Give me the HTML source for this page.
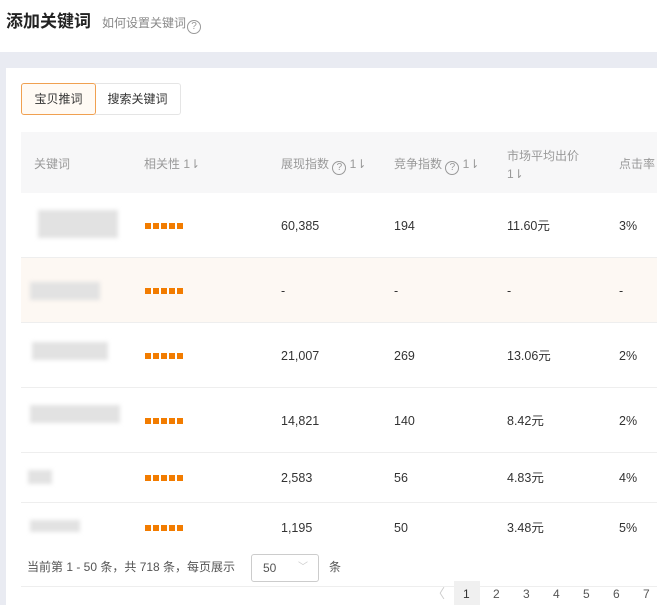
<!DOCTYPE html>
<html><head><meta charset="utf-8"><style>
*{margin:0;padding:0;box-sizing:border-box}
body{width:657px;height:605px;overflow:hidden;background:#fff;font-family:"Liberation Sans","Noto Sans CJK SC",sans-serif;position:relative;color:#333}
.a{position:absolute;white-space:nowrap;line-height:16px}
.h{font-size:12px;color:#999}
.c{font-size:12.5px;color:#333;height:16px}
.sq{position:absolute;width:38px;height:6px;background:repeating-linear-gradient(90deg,#f27c00 0 6px,#fff 6px 8px)}
.q{display:inline-block;width:14px;height:14px;border:1px solid #999;border-radius:50%;font-size:10px;line-height:12px;text-align:center;vertical-align:-2px;color:#999;font-family:"Liberation Sans",sans-serif}
.blur{position:absolute;background:#e2e2e2;filter:blur(2px)}
</style></head><body>
<div class="a" style="left:6px;top:12px;font-size:17px;font-weight:bold;color:#222;line-height:20px">添加关键词</div>
<div class="a" style="left:102px;top:15px;font-size:12px;color:#888">如何设置关键词<span class="q" style="margin-left:1px">?</span></div>
<div class="a" style="left:0;top:52px;width:657px;height:553px;background:#e9ebf2"></div>
<div class="a" style="left:6px;top:68px;width:651px;height:537px;background:#fff"></div>
<div class="a" style="left:21px;top:83px;width:75px;height:32px;border:1px solid #f0a050;border-radius:3px;background:#fffaf4;font-size:12px;line-height:30px;text-align:center;color:#333">宝贝推词</div>
<div class="a" style="left:95px;top:83px;width:86px;height:32px;border:1px solid #e5e5e5;border-left:none;border-radius:0 3px 3px 0;font-size:12px;line-height:30px;text-align:center;color:#333">搜索关键词</div>
<div class="a" style="left:21px;top:132px;width:636px;height:61px;background:#f7f7f8"></div>
<div class="a h" style="left:34px;top:156px">关键词</div>
<div class="a h" style="left:144px;top:156px">相关性 1⇂</div>
<div class="a h" style="left:281px;top:156px">展现指数 <span class="q">?</span> 1⇂</div>
<div class="a h" style="left:394px;top:156px">竞争指数 <span class="q">?</span> 1⇂</div>
<div class="a h" style="left:507px;top:147px;line-height:18px">市场平均出价<br>1⇂</div>
<div class="a h" style="left:619px;top:156px">点击率</div>
<div class="a" style="left:21px;top:258px;width:636px;height:65px;background:#fdf8f3"></div>
<div class="a" style="left:21px;top:257px;width:636px;height:1px;background:#eee"></div>
<div class="a" style="left:21px;top:322px;width:636px;height:1px;background:#eee"></div>
<div class="a" style="left:21px;top:387px;width:636px;height:1px;background:#eee"></div>
<div class="a" style="left:21px;top:452px;width:636px;height:1px;background:#eee"></div>
<div class="a" style="left:21px;top:502px;width:636px;height:1px;background:#eee"></div>
<div class="a" style="left:21px;top:586px;width:636px;height:1px;background:#eee"></div>
<div class="blur" style="left:38px;top:210px;width:80px;height:28px"></div>
<div class="blur" style="left:30px;top:282px;width:70px;height:18px"></div>
<div class="blur" style="left:32px;top:342px;width:76px;height:18px"></div>
<div class="blur" style="left:30px;top:405px;width:90px;height:18px"></div>
<div class="blur" style="left:28px;top:470px;width:24px;height:14px"></div>
<div class="blur" style="left:30px;top:520px;width:50px;height:12px"></div>
<div class="sq" style="left:145px;top:223px"></div>
<div class="sq" style="left:145px;top:288px"></div>
<div class="sq" style="left:145px;top:353px"></div>
<div class="sq" style="left:145px;top:418px"></div>
<div class="sq" style="left:145px;top:475px"></div>
<div class="sq" style="left:145px;top:525px"></div>
<div class="a c" style="left:281px;top:218px">60,385</div><div class="a c" style="left:394px;top:218px">194</div><div class="a c" style="left:507px;top:218px">11.60元</div><div class="a c" style="left:619px;top:218px">3%</div>
<div class="a c" style="left:281px;top:283px">-</div><div class="a c" style="left:394px;top:283px">-</div><div class="a c" style="left:507px;top:283px">-</div><div class="a c" style="left:619px;top:283px">-</div>
<div class="a c" style="left:281px;top:348px">21,007</div><div class="a c" style="left:394px;top:348px">269</div><div class="a c" style="left:507px;top:348px">13.06元</div><div class="a c" style="left:619px;top:348px">2%</div>
<div class="a c" style="left:281px;top:413px">14,821</div><div class="a c" style="left:394px;top:413px">140</div><div class="a c" style="left:507px;top:413px">8.42元</div><div class="a c" style="left:619px;top:413px">2%</div>
<div class="a c" style="left:281px;top:470px">2,583</div><div class="a c" style="left:394px;top:470px">56</div><div class="a c" style="left:507px;top:470px">4.83元</div><div class="a c" style="left:619px;top:470px">4%</div>
<div class="a c" style="left:281px;top:520px">1,195</div><div class="a c" style="left:394px;top:520px">50</div><div class="a c" style="left:507px;top:520px">3.48元</div><div class="a c" style="left:619px;top:520px">5%</div>
<div class="a" style="left:27px;top:559px;font-size:12px;color:#555">当前第 1 - 50 条，共 718 条，每页展示</div>
<div class="a" style="left:251px;top:554px;width:68px;height:28px;border:1px solid #ccc;border-radius:3px;font-size:12px;line-height:26px;padding-left:11px;color:#555">50<span style="position:absolute;left:46px;top:0;color:#ccc;font-size:10px">﹀</span></div>
<div class="a" style="left:329px;top:559px;font-size:12px;color:#555">条</div>
<div class="a" style="left:432px;top:586px;font-size:13px;color:#ccc">〈</div>
<div class="a" style="left:454px;top:581px;width:26px;height:24px;background:#f0f0f0"></div>
<div class="a" style="left:463px;top:586px;font-size:12px;color:#333">1</div>
<div class="a" style="left:493px;top:586px;font-size:12px;color:#555">2</div>
<div class="a" style="left:523px;top:586px;font-size:12px;color:#555">3</div>
<div class="a" style="left:553px;top:586px;font-size:12px;color:#555">4</div>
<div class="a" style="left:583px;top:586px;font-size:12px;color:#555">5</div>
<div class="a" style="left:613px;top:586px;font-size:12px;color:#555">6</div>
<div class="a" style="left:643px;top:586px;font-size:12px;color:#555">7</div>
</body></html>
